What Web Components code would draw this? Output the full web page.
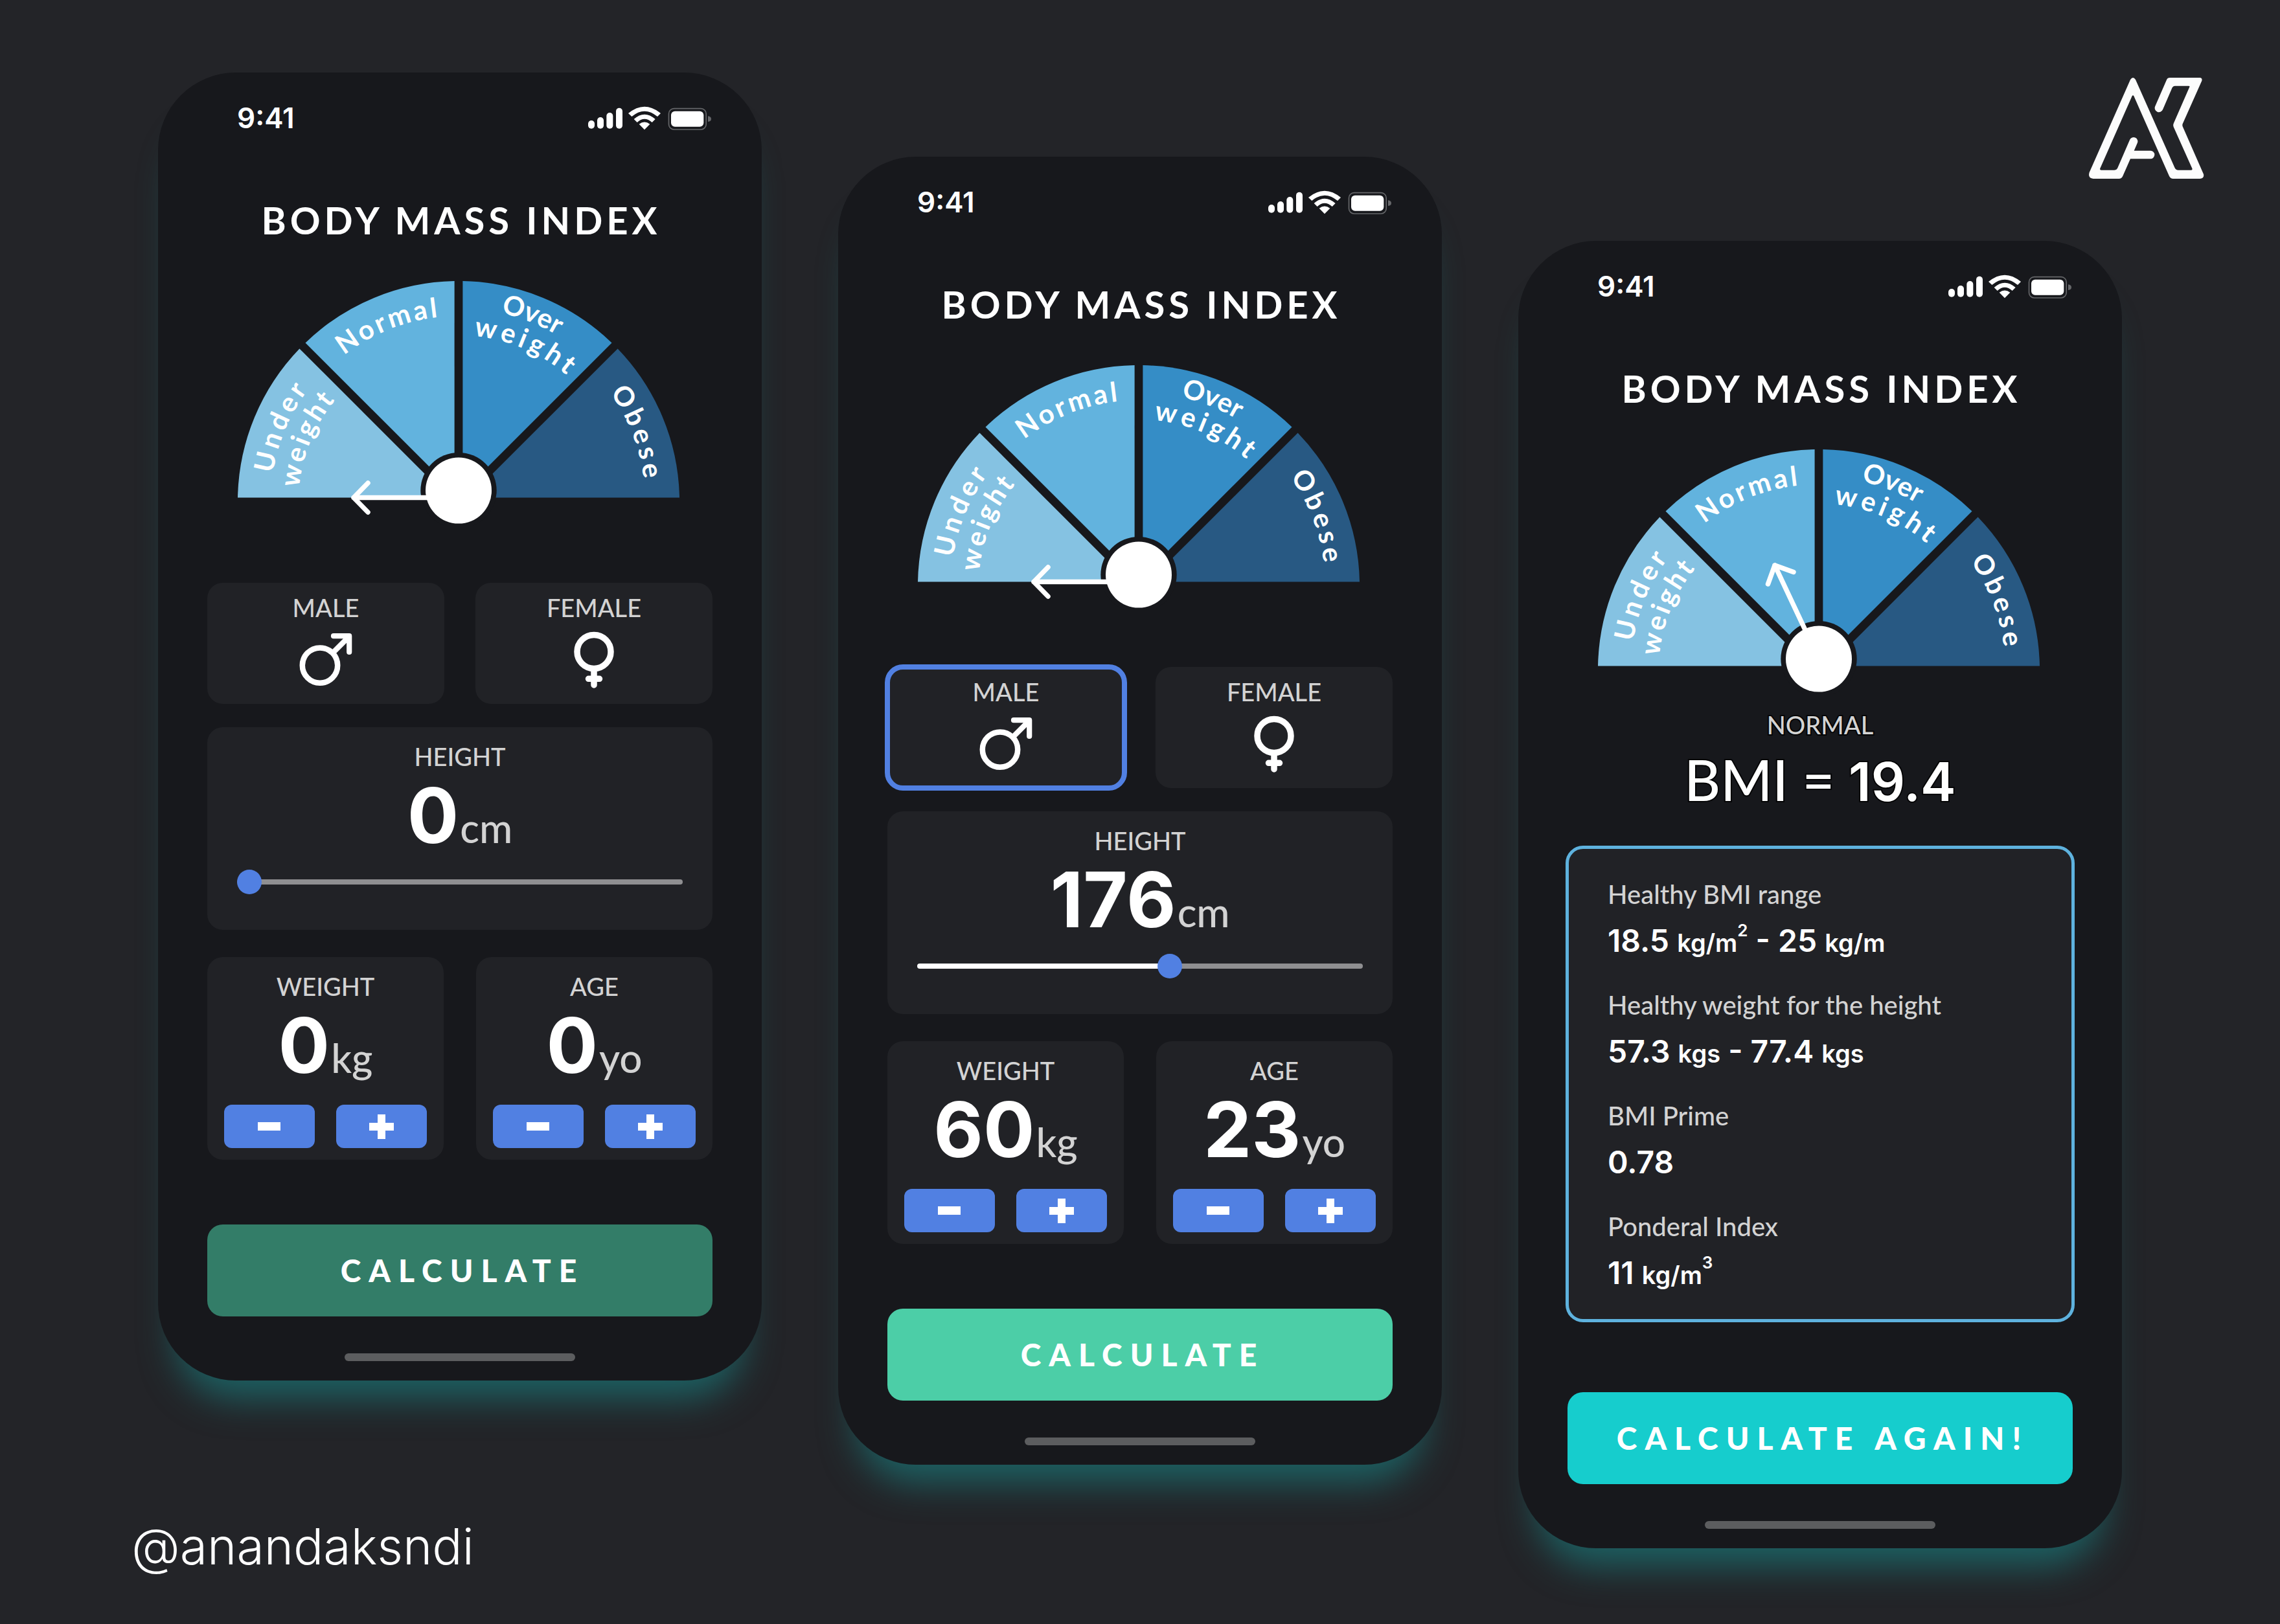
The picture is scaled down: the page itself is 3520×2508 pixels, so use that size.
<!DOCTYPE html>
<html lang="en">
<head>
<meta charset="utf-8">
<title>Body Mass Index</title>
<style>
  :root {
    --text: "Lato", "Open Sans", sans-serif;
    --digits: "Inter", "Noto Sans", sans-serif;
    --page: #232428;
    --screen: #17181c;
    --card: #212226;
    --muted: #d3d3d3;
    --accent: #5180e2;
    --radius: 24px;
  }
  body { margin: 0; min-height: 100vh; background: var(--page); color: #fff; font-family: var(--text); }
</style>
</head>
<body>
<bmi-board>
  <phone-frame slot="first">
    <bmi-gauge></bmi-gauge>
    <gender-picker></gender-picker>
    <height-card value="0"></height-card>
    <metric-row>
      <stepper-card label="Weight" value="0" unit="kg"></stepper-card>
      <stepper-card label="Age" value="0" unit="yo"></stepper-card>
    </metric-row>
    <action-button slot="action" disabled style="--fill:#337d68">CALCULATE</action-button>
  </phone-frame>
  <user-handle slot="first">@anandaksndi</user-handle>

  <phone-frame slot="second">
    <bmi-gauge></bmi-gauge>
    <gender-picker value="male"></gender-picker>
    <height-card value="176"></height-card>
    <metric-row>
      <stepper-card label="Weight" value="60" unit="kg"></stepper-card>
      <stepper-card label="Age" value="23" unit="yo"></stepper-card>
    </metric-row>
    <action-button slot="action" style="--fill:#4ccea7">CALCULATE</action-button>
  </phone-frame>

  <brand-mark slot="third"></brand-mark>
  <phone-frame slot="third">
    <bmi-gauge reading="normal"></bmi-gauge>
    <bmi-result>
      <span slot="category">NORMAL</span>
      <span slot="score">19.4</span>
    </bmi-result>
    <result-panel>
      <result-row label="Healthy BMI range">18.5 <small>kg/m</small><sup>2</sup> - 25 <small>kg/m</small></result-row>
      <result-row label="Healthy weight for the height">57.3 <small>kgs</small> - 77.4 <small>kgs</small></result-row>
      <result-row label="BMI Prime">0.78</result-row>
      <result-row label="Ponderal Index">11 <small>kg/m</small><sup>3</sup></result-row>
    </result-panel>
    <action-button slot="action" style="--fill:#16cdcd">CALCULATE AGAIN!</action-button>
  </phone-frame>
</bmi-board>

<script>
  const define = (name, render) => customElements.define(name, class extends HTMLElement {
    connectedCallback() {
      if (this.shadowRoot) return;
      this.attachShadow({ mode: "open" }).innerHTML = render(this);
    }
  });

  /* Three staggered columns */
  define("bmi-board", () => `
    <style>
      :host { display: grid; grid-template-columns: repeat(3, minmax(0, 1fr)); gap: 118px; align-items: start; padding: 0 244px; }
      .column { display: flex; flex-direction: column; }
      .one { padding-top: 112px; }
      .two { padding-top: 242px; }
      .three { padding-top: 118px; }
    </style>
    <div class="column one"><slot name="first"></slot></div>
    <div class="column two"><slot name="second"></slot></div>
    <div class="column three"><slot name="third"></slot></div>`);

  define("phone-frame", () => `
    <style>
      :host { display: flex; flex-direction: column; padding: 44px 76px 30px; border-radius: 120px;
        background: var(--screen); box-shadow: 0 56px 54px -28px #1d6062; }
      h2 { margin: 97px 0 57px; padding-left: 4px; text-align: center; font-size: 58px; line-height: 70px;
        font-weight: 700; letter-spacing: 6px; white-space: nowrap; }
      .home { width: 356px; height: 12px; margin: 57px auto 0; border-radius: 6px; background: #5c5d5f; }
    </style>
    <status-bar></status-bar>
    <h2>BODY MASS INDEX</h2>
    <slot></slot>
    <slot name="action"></slot>
    <div class="home"></div>`);

  define("status-bar", () => `
    <style>
      :host { display: flex; justify-content: space-between; align-items: center; padding: 0 2px 0 46px;
        font: 600 44px/52px var(--digits); }
      svg { display: block; }
    </style>
    <time>9:41</time>
    <svg width="190" height="37" viewBox="84 70 570 111" fill="#fff" aria-hidden="true">
      <rect x="84" y="136" width="30" height="38" rx="15"/>
      <rect x="126" y="121" width="30" height="53" rx="15"/>
      <rect x="169" y="100" width="30" height="74" rx="15"/>
      <rect x="213" y="78" width="30" height="96" rx="15"/>
      <path d="M270 103Q345 41 420 103L405 118Q345 68 286 118Z"/>
      <path d="M296 130Q345 86 395 130L380 145Q345 113 311 145Z"/>
      <path d="M320 153Q345 134 370 153L345 179Z"/>
      <rect x="457.500" y="81" width="173" height="97" rx="24" fill="none" stroke="#66676a" stroke-width="5"/>
      <rect x="468" y="93" width="151" height="72" rx="18"/>
      <path d="M639 116Q654 118 654 129Q654 140 639 142Z" fill="#66676a"/>
    </svg>`);

  const needles = {
    none: "M388 336.500H226M248 314L226 336.500L248 359",
    normal: "M388 325.500L320 181M349 191.500L320 181L309.500 210"
  };
  const arc = (id, r) => `<path id="${id}" d="M${388 - r} 343A${r} ${r} 0 0 1 ${388 + r} 343"/>`;
  const curved = (id, at, text, cls = "") =>
    `<text class="${cls}"><textPath href="#${id}" startOffset="${at}">${text}</textPath></text>`;

  define("bmi-gauge", el => `
    <style>
      :host { display: block; }
      svg { display: block; width: 100%; height: auto; }
      text { font: 700 42px var(--text); letter-spacing: 6px; fill: #fff; }
      .tight { letter-spacing: 4px; }
      .snug { letter-spacing: 0; }
      .needle { fill: none; stroke: #fff; stroke-width: 7.5; stroke-linecap: round; stroke-linejoin: round; }
    </style>
    <svg viewBox="0 0 780 380" role="img" aria-label="BMI gauge">
      <defs>${arc("under", 290)}${arc("inner", 247)}${arc("normal", 287)}${arc("over", 299)}${arc("mid", 257)}${arc("obese", 288)}</defs>
      <path fill="#85c2e2" d="M47 336.600A341 341 0 0 1 142.400 106.500L372.500 336.600Z"/>
      <path fill="#62b3de" d="M151.500 97.400A341 341 0 0 1 381.600 2.100V327.500Z"/>
      <path fill="#358dc6" d="M394.400 2.100A341 341 0 0 1 624.500 97.400L394.400 327.500Z"/>
      <path fill="#285983" d="M633.600 106.500A341 341 0 0 1 729 336.600H403.500Z"/>
      ${curved("under", 44, "Under")}
      ${curved("inner", 22, "weight", "tight")}
      ${curved("normal", 260, "Normal", "tight")}
      ${curved("over", 535, "Over", "snug")}
      ${curved("mid", 427, "weight")}
      ${curved("obese", 724, "Obese")}
      <circle cx="388" cy="325.600" r="58.700" fill="#17181c"/>
      <path class="needle" d="${needles[el.getAttribute("reading") || "none"]}"/>
      <circle cx="388" cy="325.600" r="51" fill="#fff"/>
    </svg>`);

  const genderIcons = {
    male: `<circle cx="35" cy="52.600" r="27.200" stroke-width="8.500"/><path stroke-width="8.200" d="M55 33L79 9M56 7.200H80.200V32"/>`,
    female: `<circle cx="44" cy="31.400" r="26" stroke-width="9.500"/><path stroke-width="9.500" d="M44 60V83M35.500 73.300H52.500"/>`
  };
  define("gender-picker", el => `
    <style>
      :host { display: block; margin: 88px 0 36px; }
      fieldset { display: flex; gap: 48px; margin: 0; padding: 0; border: 0; min-width: 0; }
      label { position: relative; flex: 1; display: flex; flex-direction: column; align-items: center; gap: 14px;
        padding: 15px 0 24px; border-radius: var(--radius); background: var(--card);
        color: var(--muted); font-size: 38px; line-height: 46px; font-weight: 500; }
      input { position: absolute; inset: 0; margin: 0; appearance: none; border-radius: var(--radius); cursor: pointer; }
      input:checked { outline: 8px solid var(--accent); outline-offset: -4px; }
      svg { display: block; fill: none; stroke: #fff; stroke-linecap: round; stroke-linejoin: round; }
    </style>
    <fieldset aria-label="Gender">
      ${["male", "female"].map(g => `
      <label><input type="radio" name="gender" value="${g}" ${el.getAttribute("value") === g ? "checked" : ""}>
        <span>${g.toUpperCase()}</span>
        <svg width="88" height="88" viewBox="0 0 88 88" aria-hidden="true">${genderIcons[g]}</svg>
      </label>`).join("")}
    </fieldset>`);

  const cardStyle = `
    .card { display: flex; flex-direction: column; align-items: center; border-radius: var(--radius); background: var(--card); }
    .name { color: var(--muted); font-size: 38px; line-height: 46px; font-weight: 500; }
    .reading { display: flex; align-items: baseline; gap: 2px; height: 120px; margin-top: 8px; }
    output { font: 700 118px/120px var(--digits); }
    .unit { color: var(--muted); font-size: 62px; line-height: 70px; font-weight: 500; }`;

  define("height-card", el => {
    const value = Number(el.getAttribute("value")), max = 308;
    return `
    <style>
      :host { display: block; margin-bottom: 42px; }
      ${cardStyle}
      .card { padding: 22px 46px 55px; }
      input { appearance: none; width: 100%; height: 38px; margin: 24px 0 0; background: none; }
      input::-webkit-slider-runnable-track { height: 8px; border-radius: 4px;
        background: linear-gradient(90deg, #fff var(--filled), #8f8f91 var(--filled)); }
      input::-webkit-slider-thumb { appearance: none; width: 38px; height: 38px; margin-top: -15px;
        border-radius: 50%; background: var(--accent); }
    </style>
    <div class="card">
      <label class="name" for="height">HEIGHT</label>
      <div class="reading"><output for="height">${value}</output><span class="unit">cm</span></div>
      <input id="height" type="range" min="0" max="${max}" value="${value}" style="--filled:${Math.round(value / max * 100)}%">
    </div>`;
  });

  define("metric-row", () => `
    <style>
      :host { display: flex; gap: 50px; margin-bottom: 100px; }
      ::slotted(*) { flex: 1; }
    </style>
    <slot></slot>`);

  define("stepper-card", el => {
    const label = el.getAttribute("label");
    return `
    <style>
      :host { display: block; }
      ${cardStyle}
      .card { padding: 22px 26px 18px; }
      .steps { display: flex; gap: 33px; width: 100%; margin-top: 32px; }
      button { flex: 1; display: grid; place-items: center; height: 67px; padding: 0; border: 0; border-radius: 12px;
        background: var(--accent); }
      svg { display: block; fill: #fff; }
    </style>
    <div class="card" role="group" aria-label="${label}">
      <span class="name">${label.toUpperCase()}</span>
      <div class="reading"><output>${el.getAttribute("value")}</output><span class="unit">${el.getAttribute("unit")}</span></div>
      <div class="steps">
        <button type="button" aria-label="Decrease"><svg width="38" height="38" viewBox="0 0 38 38"><path d="M1 12H36V25H1Z"/></svg></button>
        <button type="button" aria-label="Increase"><svg width="38" height="38" viewBox="0 0 38 38"><path d="M13 0H25V13H38V25H25V38H13V25H0V13H13Z"/></svg></button>
      </div>
    </div>`;
  });

  define("action-button", el => `
    <style>
      :host { display: block; }
      button { display: block; width: 100%; height: 142px; padding: 0 0 0 8px; border: 0; border-radius: var(--radius);
        background: var(--fill); color: #fff; font: 900 48px/58px var(--text); letter-spacing: 12px; white-space: nowrap; }
    </style>
    <button type="button" ${el.hasAttribute("disabled") ? "disabled" : ""}><slot></slot></button>`);

  define("bmi-result", () => `
    <style>
      :host { display: flex; flex-direction: column; align-items: center; gap: 10px; margin: 24px 0 53px;
        -webkit-text-stroke: 4px #050506; paint-order: stroke fill; }
      .category { color: var(--muted); font-size: 38px; line-height: 46px; font-weight: 500; }
      .score { height: 104px; font-size: 86px; line-height: 104px; font-weight: 500; white-space: nowrap; }
      .value { font-family: var(--digits); font-weight: 600; font-size: 82px; line-height: 90px; }
    </style>
    <div class="category"><slot name="category"></slot></div>
    <div class="score">BMI = <span class="value"><slot name="score"></slot></span></div>`);

  define("result-panel", () => `
    <style>
      :host { display: flex; flex-direction: column; gap: 44px; margin-bottom: 111px; padding: 47px 62px 43px;
        border-radius: var(--radius); background: var(--card); outline: 5px solid #5eb2de; outline-offset: -2px; }
    </style>
    <slot></slot>`);

  define("result-row", el => `
    <style>
      :host { display: flex; flex-direction: column; gap: 17px; }
      .name { color: var(--muted); font-size: 40px; line-height: 50px; font-weight: 500; }
      .value { height: 60px; font: 600 48px/60px var(--digits); }
      ::slotted(small) { font-size: 38px; line-height: 40px; }
      ::slotted(sup) { font-size: 26px; line-height: 0; vertical-align: 24px; }
    </style>
    <div class="name">${el.getAttribute("label")}</div>
    <div class="value"><slot></slot></div>`);

  define("user-handle", () => `
    <style>
      :host { display: block; margin: 212px 0 0 -41px; font: 300 77px/88px var(--digits); }
    </style>
    <slot></slot>`);

  define("brand-mark", () => `
    <style>
      :host { display: block; align-self: flex-end; margin: 0 -129px 94px 0; }
      svg { display: block; }
    </style>
    <svg width="182" height="160" viewBox="130 114 546 480" fill="#fcfcfc" role="img" aria-label="AK logo">
      <path d="M325.500 407.600A19 19 0 0 1 360.500 422.400L345 458H421A19 19 0 0 1 421 496H328L293 575Q287 588 275 588H156Q130 586 138 559L328 129Q340 111 352 129L533 536Q538 548 550 548H608Q617 548 614 540L529 350Q524 340 529 330L602 163Q604 158 598 158H533Q526 158 522 166L478 268A19 19 0 0 1 442.500 253L496 130Q500 120 511 120H650Q662 121 659 134L570 334Q568 340 570 346L667 567Q671 586 650 588H526Q514 588 508 576L344 205Q340 198 336 205L188 540Q185 548 193 548H254Q264 548 268 540Z"/>
    </svg>`);
</script>
</body>
</html>
